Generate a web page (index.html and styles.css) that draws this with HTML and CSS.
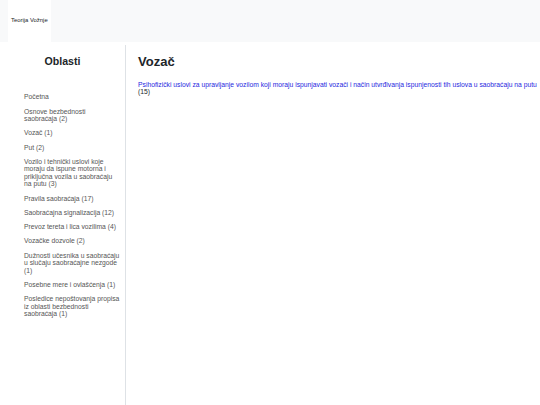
FILE: index.html
```html
<!DOCTYPE html>
<html lang="sr">
<head>
<meta charset="utf-8">
<title>Teorija Vožnje</title>
<link rel="stylesheet" href="styles.css">
</head>
<body>
<header class="topbar">
  <a class="brand" href="#">Teorija Vožnje</a>
</header>
<div class="layout">
  <aside class="sidebar">
    <h3 class="sidebar-title">Oblasti</h3>
    <ul class="nav">
      <li><a href="#">Početna</a></li>
      <li><a href="#">Osnove bezbednosti saobraćaja (2)</a></li>
      <li><a href="#">Vozač (1)</a></li>
      <li><a href="#">Put (2)</a></li>
      <li><a href="#">Vozilo i tehnički uslovi koje moraju da ispune motorna i priključna vozila u saobraćaju na putu (3)</a></li>
      <li><a href="#">Pravila saobraćaja (17)</a></li>
      <li><a href="#">Saobraćajna signalizacija (12)</a></li>
      <li><a href="#">Prevoz tereta i lica vozilima (4)</a></li>
      <li><a href="#">Vozačke dozvole (2)</a></li>
      <li><a href="#">Dužnosti učesnika u saobraćaju u slučaju saobraćajne nezgode (1)</a></li>
      <li><a href="#">Posebne mere i ovlašćenja (1)</a></li>
      <li><a href="#">Posledice nepoštovanja propisa iz oblasti bezbednosti saobraćaja (1)</a></li>
    </ul>
  </aside>
  <main class="content">
    <h2 class="page-title">Vozač</h2>
    <p class="topic"><a href="#">Psihofizički uslovi za upravljanje vozilom koji moraju ispunjavati vozači i način utvrđivanja ispunjenosti tih uslova u saobraćaju na putu</a> (15)</p>
  </main>
</div>
</body>
</html>
```

FILE: styles.css
```css
html, body {
  margin: 0;
  padding: 0;
  background: #fff;
}
body {
  font-family: "Liberation Sans", Arial, sans-serif;
  font-size: 6.75px;
  line-height: 1.1;
  color: #212529;
  height: 405px;
  display: flex;
  flex-direction: column;
}
.topbar {
  height: 42px;
  background: #f8f9fa;
  display: flex;
  align-items: stretch;
  flex: none;
}
.brand {
  margin-left: 8px;
  padding: 0 3px 1px;
  background: #fff;
  color: #212529;
  text-decoration: none;
  font-size: 5.9px;
  display: flex;
  align-items: center;
}
.layout {
  flex: 1;
  display: flex;
  margin-top: 3px;
}
.sidebar {
  width: 126px;
  flex: none;
  border-right: 1px solid #dee2e6;
  padding: 9.6px 0 0 0;
  box-sizing: border-box;
}
.sidebar-title {
  margin: 0;
  font-size: 10.6px;
  line-height: 1.2;
  font-weight: bold;
  text-align: center;
}
.nav {
  list-style: none;
  margin: 26px 0 0 24px;
  padding: 0;
  width: 95.9px;
}
.nav li {
  margin-bottom: 6.9px;
}
.nav a {
  color: #555;
  text-decoration: none;
}
.content {
  flex: 1;
  padding: 9.2px 0 0 12px;
}
.page-title {
  margin: 0;
  font-size: 13px;
  line-height: 1.2;
  font-weight: bold;
}
.topic {
  margin: 11px 0 0;
  line-height: 7.6px;
}
.topic a {
  color: #1f1fe0;
  text-decoration: none;
}
```
